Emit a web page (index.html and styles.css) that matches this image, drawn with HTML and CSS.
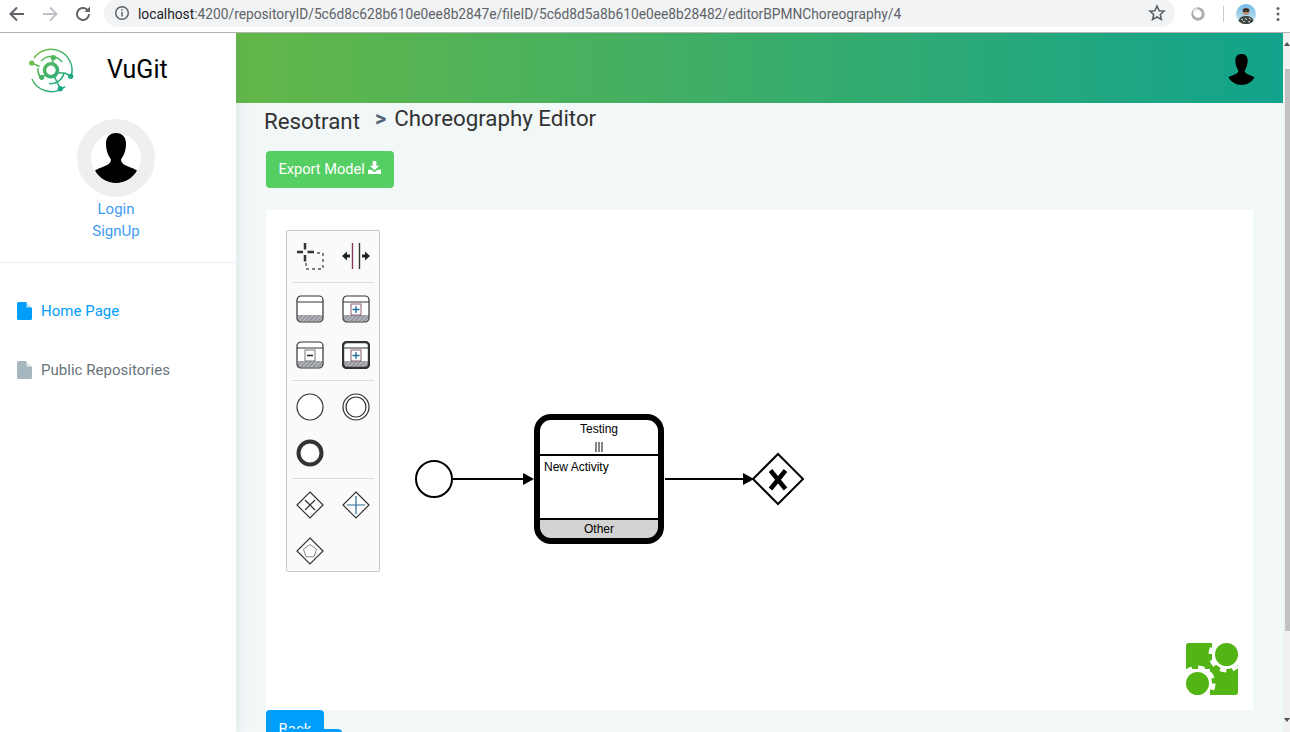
FILE: index.html
```html
<!DOCTYPE html>
<html>
<head>
    <meta charset="utf-8">
    <title>VuGit - Choreography Editor</title>
    <link rel="stylesheet" href="styles.css">
</head>
<body>
    <div class="browser-bar">
        <svg class="nav-icon" viewBox="0 0 20 20"><path d="M17 10H4M10 3.500L3.500 10l6.500 6.500" fill="none" stroke="#5f6368" stroke-width="2"/></svg>
        <svg class="nav-icon" viewBox="0 0 20 20"><path d="M3 10h13M10 3.500l6.500 6.500-6.500 6.500" fill="none" stroke="#bdc1c6" stroke-width="2"/></svg>
        <svg class="nav-icon" viewBox="0 0 20 20"><path d="M16 10a6 6 0 1 1-1.800-4.300" fill="none" stroke="#5f6368" stroke-width="2"/><path d="M17 2.500V8h-5.500z" fill="#5f6368"/></svg>
        <div class="omnibox">
            <svg class="info-icon" viewBox="0 0 16 16"><circle cx="8" cy="8" r="6.300" fill="none" stroke="#5f6368" stroke-width="1.500"/><path d="M8 7v4.500M8 4.300v1.500" stroke="#5f6368" stroke-width="1.500"/></svg>
            <span class="url"><span class="url-host">localhost</span>:4200/repositoryID/5c6d8c628b610e0ee8b2847e/fileID/5c6d8d5a8b610e0ee8b28482/editorBPMNChoreography/4</span>
            <svg class="star-icon" viewBox="0 0 18 18"><path d="M9 2l2.100 4.700 5 .5-3.800 3.300 1.100 5L9 13l-4.400 2.500 1.100-5L1.900 7.200l5-.5z" fill="none" stroke="#5f6368" stroke-width="1.600"/></svg>
        </div>
        <svg class="ext-icon" viewBox="0 0 16 16"><circle cx="8" cy="8" r="5.200" fill="#fff" stroke="#adadad" stroke-width="3"/><circle cx="6.800" cy="6.800" r="3.600" fill="#fff"/><path d="M3.500 5.500A5 5 0 0 1 7 3" fill="none" stroke="#e2e2e2" stroke-width="2"/></svg>
        <div class="bar-sep"></div>
        <svg class="avatar" viewBox="0 0 20 20">
            <defs>
                <linearGradient id="sky" x1="0" y1="0" x2="0" y2="1">
                    <stop offset="0" stop-color="#6fb8e6"/>
                    <stop offset="1" stop-color="#d4e8f2"/>
                </linearGradient>
            </defs>
            <circle cx="10" cy="10" r="10" fill="url(#sky)"/>
            <path d="M2.500 17c1-4 4-5 7.500-5s6.500 1 7.500 5a10 10 0 0 1-15 0z" fill="#3f4542"/>
            <path d="M5 15l2 1M9 14l2 2M13 14l2 1.500M7 18l2-1M12 18l2-.5" stroke="#e2e2da" stroke-width="1"/>
            <circle cx="10" cy="7.500" r="3.400" fill="#b98c70"/>
            <path d="M6.500 6.500c.5-3 6.500-3 7 0z" fill="#2a2320"/>
            <path d="M7 7.200h6" stroke="#1a1a1a" stroke-width="1.200"/>
        </svg>
        <svg class="dots" viewBox="0 0 4 16"><circle cx="2" cy="2.500" r="1.500"/><circle cx="2" cy="8" r="1.500"/><circle cx="2" cy="13.500" r="1.500"/></svg>
    </div>

    <div class="app">
        <aside class="sidebar">
            <div class="brand">
                <svg class="brand-logo" viewBox="0 0 44 44">
                    <defs>
                        <linearGradient id="logoGrad" gradientUnits="userSpaceOnUse" x1="4" y1="4" x2="40" y2="40">
                            <stop offset="0" stop-color="#7ac143"/>
                            <stop offset="1" stop-color="#0fa58e"/>
                        </linearGradient>
                    </defs>
                    <g fill="none" stroke="url(#logoGrad)">
                        <path d="M5 10A21 21 0 0 1 42.500 27M36 38.500A21 21 0 0 1 3 31" stroke-width="1.500"/>
                        <path d="M12 13A13.500 13.500 0 0 1 33 14M35 25A13.500 13.500 0 0 1 20 35.500M11 29A13.500 13.500 0 0 1 9 20" stroke-width="1.500"/>
                        <circle cx="22" cy="22.300" r="6.500" stroke-width="3.600"/>
                        <path d="M24.300 9.700l-1 6M2.700 15l8 3.500M12.700 29.300l5-3.500M41.700 28.300l-5-3-7-.5M31.300 40.700l-6-12" stroke-width="1.500"/>
                    </g>
                    <g fill="url(#logoGrad)">
                        <circle cx="24.300" cy="9.700" r="2.600"/>
                        <circle cx="2.700" cy="15" r="2.600"/>
                        <circle cx="12.700" cy="29.300" r="2.600"/>
                        <circle cx="41.700" cy="28.300" r="2.600"/>
                        <circle cx="31.300" cy="40.700" r="2.600"/>
                    </g>
                </svg>
                <span class="brand-name">VuGit</span>
            </div>
            <div class="profile">
                <div class="profile-pic">
                    <svg viewBox="0 0 50 50"><path class="person" d="M25 0c-6.500 0-10 4-10 11 0 7 2.500 12 5 15.500 0 3-2 5-6 6.500-4 1.500-8 3-10 4.500 4 7.500 12 12.500 21 12.500s17-5 21-12.500c-2-1.500-6-3-10-4.500-4-1.500-6-3.500-6-6.500 2.500-3.500 5-8.500 5-15.500 0-7-3.500-11-10-11z"/></svg>
                </div>
                <a class="profile-link">Login</a>
                <a class="profile-link">SignUp</a>
            </div>
            <nav class="side-nav">
                <a class="nav-item active">
                    <svg viewBox="0 0 15 18"><path d="M1.500 0H9l6 6v10.500a1.500 1.500 0 0 1-1.500 1.500h-12A1.500 1.500 0 0 1 0 16.500v-15A1.500 1.500 0 0 1 1.500 0z"/><path d="M9.500 0v5.500H15z" fill="#fff" opacity=".7"/></svg>
                    Home Page
                </a>
                <a class="nav-item">
                    <svg viewBox="0 0 15 18"><path d="M1.500 0H9l6 6v10.500a1.500 1.500 0 0 1-1.500 1.500h-12A1.500 1.500 0 0 1 0 16.500v-15A1.500 1.500 0 0 1 1.500 0z"/><path d="M9.500 0v5.500H15z" fill="#fff" opacity=".7"/></svg>
                    Public Repositories
                </a>
            </nav>
        </aside>

        <main class="main">
            <header class="topbar">
                <svg class="topbar-user" viewBox="0 0 50 50"><path class="person" d="M25 0c-6.500 0-10 4-10 11 0 7 2.500 12 5 15.500 0 3-2 5-6 6.500-4 1.500-8 3-10 4.500 4 7.500 12 12.500 21 12.500s17-5 21-12.500c-2-1.500-6-3-10-4.500-4-1.500-6-3.500-6-6.500 2.500-3.500 5-8.500 5-15.500 0-7-3.500-11-10-11z"/></svg>
            </header>
            <div class="content">
                <div class="crumbs">
                    <span class="crumb-repo">Resotrant</span>
                    <span class="crumb-sep">&gt;</span>
                    <span class="crumb-page">Choreography Editor</span>
                </div>
                <button class="btn btn-export">Export Model
                    <svg viewBox="0 0 14 14"><path d="M5 0h4v5h3L7 10 2 5h3z"/><path d="M0 9.500h3.500L7 12l3.500-2.500H14V14H0z"/></svg>
                </button>
                <div class="canvas">
                    <svg class="diagram" viewBox="266 210 987 500">
                        <circle cx="434" cy="479" r="18" fill="#fff" stroke="#000" stroke-width="2"/>
                        <path d="M453 479h71" stroke="#000" stroke-width="2"/>
                        <path d="M534 479l-11-6v12z"/>

                        <rect x="537" y="417" width="124" height="124" rx="14" fill="#fff"/>
                        <path d="M540 520h118v10a8 8 0 0 1-8 8h-102a8 8 0 0 1-8-8z" fill="#d3d3d3"/>
                        <path d="M537 455h124M537 519h124" stroke="#000" stroke-width="2"/>
                        <rect x="537" y="417" width="124" height="124" rx="14" fill="none" stroke="#000" stroke-width="6"/>
                        <path d="M596 442v10M599 442v10M602 442v10" stroke="#777" stroke-width="1.800"/>
                        <text class="task-text" x="599" y="433" text-anchor="middle">Testing</text>
                        <text class="task-text" x="544" y="471">New Activity</text>
                        <text class="task-text" x="599" y="533" text-anchor="middle">Other</text>

                        <path d="M665 479h79" stroke="#000" stroke-width="2"/>
                        <path d="M754 479l-11-6v12z"/>
                        <path d="M778 454l25 25-25 25-25-25z" fill="#fff" stroke="#000" stroke-width="2"/>
                        <path d="M770.500 470.500l15 18.500M785.500 470.500l-15 18.500" stroke="#000" stroke-width="4.500"/>

                        <rect x="1186" y="643" width="52" height="52" rx="3" fill="#52b415"/>
                        <path d="M1212 642h27v23h-27zM1185 669h25v27h-25z" fill="#fff"/>
                        <circle cx="1226.500" cy="654.500" r="14.500" fill="#fff"/>
                        <circle cx="1226.500" cy="654.500" r="16" fill="none" stroke="#fff" stroke-width="4" stroke-dasharray="6.300 6.300"/>
                        <circle cx="1197.500" cy="683.500" r="14.500" fill="#fff"/>
                        <circle cx="1197.500" cy="683.500" r="16" fill="none" stroke="#fff" stroke-width="4" stroke-dasharray="6.300 6.300"/>
                        <circle cx="1226.500" cy="654.500" r="11.500" fill="#52b415"/>
                        <circle cx="1197.500" cy="683.500" r="11.500" fill="#52b415"/>
                    </svg>
                    <div class="palette">
                        <div class="palette-group">
                            <svg viewBox="0 0 28 28"><path d="M9 0v6.500M9 12v6.500M1 9h6M11.500 9H18" stroke="#333" stroke-width="2.500"/><path d="M21 10h6v16H10v-9" fill="none" stroke="#555" stroke-width="1.400" stroke-dasharray="3 3"/></svg>
                            <svg viewBox="0 0 28 28"><path d="M10.500 0v26" stroke="#8a3a60" stroke-width="1.400"/><path d="M17.500 0v26" stroke="#333" stroke-width="1.400"/><path d="M0 13l5-4.500v3h3v3H5v3zM28 13l-5-4.500v3h-3v3h3v3z" fill="#222"/></svg>
                        </div>
                        <div class="palette-group">
                            <svg viewBox="0 0 28 28"><use href="#ptask"/></svg>
                            <svg viewBox="0 0 28 28"><use href="#ptask"/><use href="#pplus"/></svg>
                            <svg viewBox="0 0 28 28"><use href="#ptask"/><rect x="9" y="9" width="10" height="11" fill="#fff" stroke="#777"/><path d="M11 14.500h6" stroke="#222" stroke-width="1.500"/></svg>
                            <svg viewBox="0 0 28 28"><use href="#ptask"/><rect x="1" y="1" width="26" height="26" rx="4" fill="none" stroke="#333" stroke-width="2.400"/><use href="#pplus"/></svg>
                        </div>
                        <div class="palette-group">
                            <svg viewBox="0 0 28 28"><circle cx="14" cy="14" r="13" fill="#fff" stroke="#333" stroke-width="1.200"/></svg>
                            <svg viewBox="0 0 28 28"><circle cx="14" cy="14" r="13" fill="#fff" stroke="#333" stroke-width="1.200"/><circle cx="14" cy="14" r="10" fill="#fff" stroke="#333" stroke-width="1.200"/></svg>
                            <svg viewBox="0 0 28 28"><circle cx="14" cy="14" r="11.500" fill="#fff" stroke="#333" stroke-width="4"/></svg>
                        </div>
                        <div class="palette-group">
                            <svg viewBox="0 0 28 28"><use href="#pdiamond"/><path d="M9 9l10 10M19 9L9 19" stroke="#333" stroke-width="1.200"/></svg>
                            <svg viewBox="0 0 28 28"><use href="#pdiamond"/><path d="M14 5v18M5 14h18" stroke="#2a6f97" stroke-width="1.200"/></svg>
                            <svg viewBox="0 0 28 28"><use href="#pdiamond"/><path d="M14 7.500l6.500 4.800-2.500 7.500h-8l-2.500-7.500z" fill="none" stroke="#888" stroke-width="1"/></svg>
                        </div>
                        <svg class="palette-defs" viewBox="0 0 28 28">
                            <defs>
                                <pattern id="hatch" width="3" height="3" patternUnits="userSpaceOnUse" patternTransform="rotate(45)">
                                    <rect width="3" height="3" fill="#b9bcc4"/>
                                    <rect width="1.500" height="3" fill="#8d8f94"/>
                                </pattern>
                                <g id="ptask">
                                    <rect x="1" y="1" width="26" height="26" rx="4" fill="#fff"/>
                                    <path d="M1.500 20h25v3.500a3 3 0 0 1-3 3h-19a3 3 0 0 1-3-3z" fill="url(#hatch)"/>
                                    <path d="M1 7h26" stroke="#333" stroke-width="1"/>
                                    <rect x="1" y="1" width="26" height="26" rx="4" fill="none" stroke="#333" stroke-width="1.200"/>
                                </g>
                                <g id="pplus">
                                    <rect x="9" y="9" width="10" height="11" fill="#fff" stroke="#8a5a78"/>
                                    <path d="M14 11v7M10.500 14.500h7" stroke="#1f6f96" stroke-width="1.300"/>
                                </g>
                                <path id="pdiamond" d="M14 1l13 13-13 13L1 14z" fill="#fff" stroke="#333" stroke-width="1.200"/>
                            </defs>
                        </svg>
                    </div>
                </div>
                <button class="btn btn-back">Back</button>
                <button class="btn btn-next"></button>
            </div>
        </main>

        <div class="scrollbar">
            <span class="scroll-up"></span>
            <div class="scroll-thumb"></div>
            <span class="scroll-down"></span>
        </div>
    </div>
</body>
</html>
```

FILE: styles.css
```css
* {box-sizing:border-box;}
html, body {height:100%;}
body {margin:0;overflow:hidden;font-family:"Roboto",sans-serif;font-size:15px;background:#f2f7f8;}
a {cursor:pointer;}

.browser-bar {height:33px;display:flex;align-items:center;background:#fff;border-bottom:1px solid #b4b4b4;padding-bottom:5px;}
.nav-icon {width:20px;height:20px;margin-left:7px;margin-right:4px;flex:none;}
.nav-icon + .nav-icon {margin-left:9px;}
.omnibox {flex:none;width:1071px;height:28px;margin-left:7px;margin-top:-1px;background:#f1f3f4;border-radius:14px;display:flex;align-items:center;padding-left:10px;padding-right:9px;}
.info-icon {width:16px;height:16px;flex:none;}
.url {margin-left:8px;margin-top:2px;font-size:13.75px;color:#5f6368;white-space:nowrap;flex:1;}
.url-host {color:#202124;}
.star-icon {width:18px;height:18px;flex:none;}
.ext-icon {width:16px;height:16px;margin-left:15px;flex:none;}
.bar-sep {width:1px;height:16px;background:#ccc;margin-left:17px;}
.avatar {width:20px;height:20px;margin-left:12px;flex:none;}
.dots {width:4px;height:16px;margin-left:20px;fill:#5f6368;flex:none;}

.app {height:699px;display:flex;overflow:hidden;}
.person {fill:#000;}

.sidebar {width:236px;flex:none;background:#fff;box-shadow:1px 0 12px rgba(120,130,140,.16);position:relative;z-index:1;}
.brand {height:70px;display:flex;align-items:center;padding-left:29px;}
.brand-logo {width:44px;height:44px;margin-top:3px;overflow:visible;}
.brand-name {margin-left:34px;margin-top:2px;font-size:25px;color:#000;}
.profile {height:160px;display:flex;flex-direction:column;align-items:center;padding-top:16px;padding-right:4px;border-bottom:1px solid #eceff1;}
.profile-pic {width:78px;height:78px;border-radius:50%;background:#fff;border:14px solid #efefef;margin-bottom:1px;}
.profile-pic svg {display:block;width:50px;height:50px;}
.profile-link {color:#3e9cf5;line-height:22px;font-size:15px;}
.side-nav {padding-top:29px;}
.nav-item {display:flex;align-items:center;height:37px;margin-bottom:22px;padding-left:17px;color:#67757c;font-size:15px;fill:#a6b7bf;letter-spacing:.03px;}
.nav-item svg {width:15px;height:18px;margin-right:9px;}
.nav-item.active {color:#009efb;fill:#009efb;}

.main {flex:1;min-width:0;}
.topbar {height:70px;background:linear-gradient(90deg,#63b748,#12a38c);display:flex;align-items:center;justify-content:flex-end;padding-right:26px;padding-top:3px;}
.topbar-user {width:31px;height:31px;}
.content {padding:0 30px;}
.crumbs {display:flex;color:#2f3d4a;height:48px;margin-left:-2px;}
.crumb-repo {font-size:22.3px;margin-top:5px;color:#333;}
.crumb-sep {font-size:22px;font-weight:700;color:#54667a;margin-left:15px;margin-top:3px;}
.crumb-page {font-size:22.3px;margin-left:8px;margin-top:2px;color:#333;}
.btn {display:block;border:0;border-radius:4px;color:#fff;font-family:inherit;font-size:15px;padding:0;}
.btn-export {width:128px;height:37px;padding-bottom:2px;background:#55ce63;font-size:14.6px;}
.btn-export svg {width:13px;height:13px;fill:#fff;}
.canvas {position:relative;height:500px;margin-top:22px;background:#fff;}
.diagram {display:block;width:100%;height:100%;}
.task-text {font-family:"Liberation Sans",sans-serif;font-size:12px;fill:#000;}
.palette {position:absolute;left:20px;top:20px;width:94px;height:342px;background:#fafafa;border:1px solid #c8c8c8;border-radius:2px;padding:0 5px;}
.palette-group {display:grid;grid-template-columns:46px 46px;grid-auto-rows:46px;justify-content:center;justify-items:center;align-items:center;border-bottom:1px solid #ddd;padding:3px 0 2px;width:82px;}
.palette-group:last-of-type {border-bottom:0;}
.palette-group svg {width:28px;height:28px;}
.palette-defs {position:absolute;width:0;height:0;}
.btn-back {width:58px;height:40px;padding-bottom:2px;background:#009efb;border-radius:4px 4px 0 0;line-height:34px;}
.btn-next {width:57px;height:20px;background:#009efb;margin-left:19px;margin-top:-21px;position:relative;}

.scrollbar {width:7px;flex:none;background:#f1f1f1;display:flex;flex-direction:column;align-items:center;}
.scroll-up {margin-top:9px;border:3px solid transparent;border-top:0;border-bottom:4px solid #505050;}
.scroll-thumb {width:5px;height:562px;background:#c1c1c1;margin-top:23px;margin-left:2px;}
.scroll-down {margin-top:auto;margin-bottom:10px;border:3px solid transparent;border-bottom:0;border-top:4px solid #505050;}
```
